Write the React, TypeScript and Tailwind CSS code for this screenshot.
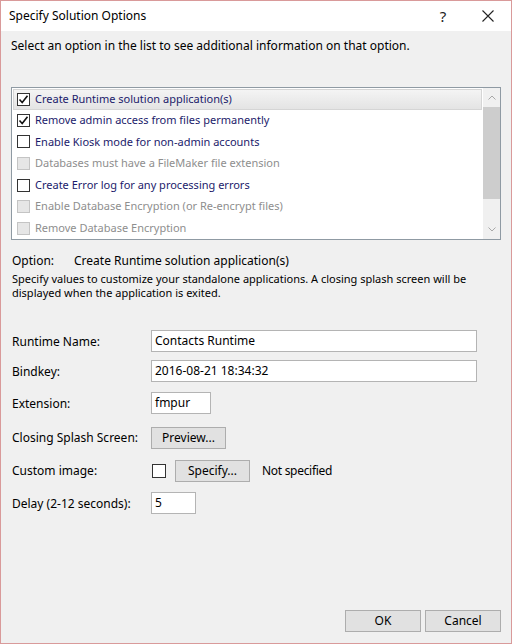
import React from 'react'

const font = { fontFamily: '"Segoe UI", "Noto Sans", "Open Sans", sans-serif' }

const options = [
  { label: 'Create Runtime solution application(s)', checked: true, enabled: true, selected: true },
  { label: 'Remove admin access from files permanently', checked: true, enabled: true },
  { label: 'Enable Kiosk mode for non-admin accounts', checked: false, enabled: true },
  { label: 'Databases must have a FileMaker file extension', checked: false, enabled: false },
  { label: 'Create Error log for any processing errors', checked: false, enabled: true },
  { label: 'Enable Database Encryption (or Re-encrypt files)', checked: false, enabled: false },
  { label: 'Remove Database Encryption', checked: false, enabled: false },
]

function CheckBox({ checked, enabled }: { checked: boolean; enabled: boolean }) {
  return (
    <span
      className={`w-[13px] h-[13px] shrink-0 border flex items-center justify-center ${
        enabled ? 'border-[#333333] bg-white' : 'border-[#c4c4c4] bg-[#e6e6e6]'
      }`}
    >
      {checked && (
        <svg width="11" height="11" viewBox="0 0 11 11">
          <path d="M1.5 5.5 L4.2 8.5 L9.5 1.8" fill="none" stroke="#111" strokeWidth="1.6" />
        </svg>
      )}
    </span>
  )
}

function Field({ value, w }: { value: string; w: string }) {
  return (
    <div className={`${w} h-[22px] bg-white border border-[#b4b4b4] flex items-center px-[3px] text-[12px] text-black`}>
      {value}
    </div>
  )
}

function Button({ label, w }: { label: string; w: string }) {
  return (
    <div className={`${w} h-[22px] bg-[#e1e1e1] border border-[#adadad] flex items-center justify-center text-[12px] text-black`}>
      {label}
    </div>
  )
}

export default function App() {
  return (
    <div className="w-[512px] h-[644px] border border-[#d99a9a] flex flex-col bg-[#f0f0f0] overflow-hidden" style={font}>
      {/* Title bar */}
      <div className="h-[30px] bg-white flex items-center pl-[8px] shrink-0">
        <span className="text-[12px] text-black flex-1">Specify Solution Options</span>
        <span className="text-[15px] text-[#222] w-[20px] text-center mr-[29px]">?</span>
        <svg width="12" height="12" viewBox="0 0 12 12" className="mr-[17px]">
          <path d="M0.5 0.5 L11.5 11.5 M11.5 0.5 L0.5 11.5" stroke="#222" strokeWidth="1.1" />
        </svg>
      </div>

      <div className="flex-1 flex flex-col px-[10px] text-[12px] text-black">
        <div className="mt-[7px] leading-[16px]">Select an option in the list to see additional information on that option.</div>

        {/* Options list */}
        <div className="mt-[33px] h-[153px] w-[490px] border border-[#8f9aa3] bg-white flex">
          <div className="flex-1 flex flex-col">
            {options.map((o) => (
              <div
                key={o.label}
                className={`flex items-center gap-[5px] ${
                  o.selected
                    ? 'bg-gradient-to-b from-[#f4f4f4] to-[#e4e4e4] border border-[#d5d5d5] pl-[3px] mx-[1px] mt-[1px] h-[21px]'
                    : 'h-[22px] pl-[5px]'
                } ${o.enabled ? 'text-[#1b1b6b]' : 'text-[#8e8e8e]'}`}
              >
                <CheckBox checked={o.checked} enabled={o.enabled} />
                <span className="text-[11px] whitespace-nowrap">{o.label}</span>
              </div>
            ))}
          </div>
          <div className="w-[17px] bg-[#f0f0f0] flex flex-col items-center">
            <div className="h-[19px] flex items-center justify-center">
              <svg width="8" height="5" viewBox="0 0 8 5">
                <path d="M0.5 4.5 L4 1 L7.5 4.5" fill="none" stroke="#a8a8a8" strokeWidth="1" />
              </svg>
            </div>
            <div className="w-[17px] h-[92px] bg-[#cdcdcd]" />
            <div className="flex-1" />
            <div className="h-[19px] flex items-center justify-center">
              <svg width="8" height="5" viewBox="0 0 8 5">
                <path d="M0.5 0.5 L4 4 L7.5 0.5" fill="none" stroke="#a8a8a8" strokeWidth="1" />
              </svg>
            </div>
          </div>
        </div>

        {/* Option details */}
        <div className="mt-[13px] flex leading-[16px] pl-[1px]">
          <span className="w-[62px]">Option:</span>
          <span>Create Runtime solution application(s)</span>
        </div>
        <div className="mt-[3px] leading-[14px] pl-[1px] text-[11px] whitespace-nowrap">
          Specify values to customize your standalone applications. A closing splash screen will be
          <br />
          displayed when the application is exited.
        </div>

        {/* Form */}
        <div className="mt-[30px] flex flex-col pl-[1px]">
          <div className="flex items-center">
            <span className="w-[139px] pt-[2px]">Runtime Name:</span>
            <Field value="Contacts Runtime" w="w-[326px]" />
          </div>
          <div className="flex items-center mt-[8px]">
            <span className="w-[139px] pt-[2px]">Bindkey:</span>
            <Field value="2016-08-21 18:34:32" w="w-[326px]" />
          </div>
          <div className="flex items-center mt-[10px]">
            <span className="w-[139px] pt-[2px]">Extension:</span>
            <Field value="fmpur" w="w-[60px]" />
          </div>
          <div className="flex items-center mt-[13px]">
            <span className="w-[139px]">Closing Splash Screen:</span>
            <Button label="Preview..." w="w-[75px]" />
          </div>
          <div className="flex items-center mt-[11px]">
            <span className="w-[139px]">Custom image:</span>
            <span className="ml-[1px] w-[14px] h-[14px] bg-white border border-[#333]" />
            <span className="ml-[9px]">
              <Button label="Specify..." w="w-[75px]" />
            </span>
            <span className="ml-[12px] tracking-[-0.3px]">Not specified</span>
          </div>
          <div className="flex items-center mt-[10px]">
            <span className="w-[139px] pt-[2px]">Delay (2-12 seconds):</span>
            <Field value="5" w="w-[45px]" />
          </div>
        </div>

        <div className="flex-1" />

        {/* Footer buttons */}
        <div className="flex justify-end gap-[4px] mb-[11px]">
          <Button label="OK" w="w-[76px]" />
          <Button label="Cancel" w="w-[76px]" />
        </div>
      </div>
    </div>
  )
}
